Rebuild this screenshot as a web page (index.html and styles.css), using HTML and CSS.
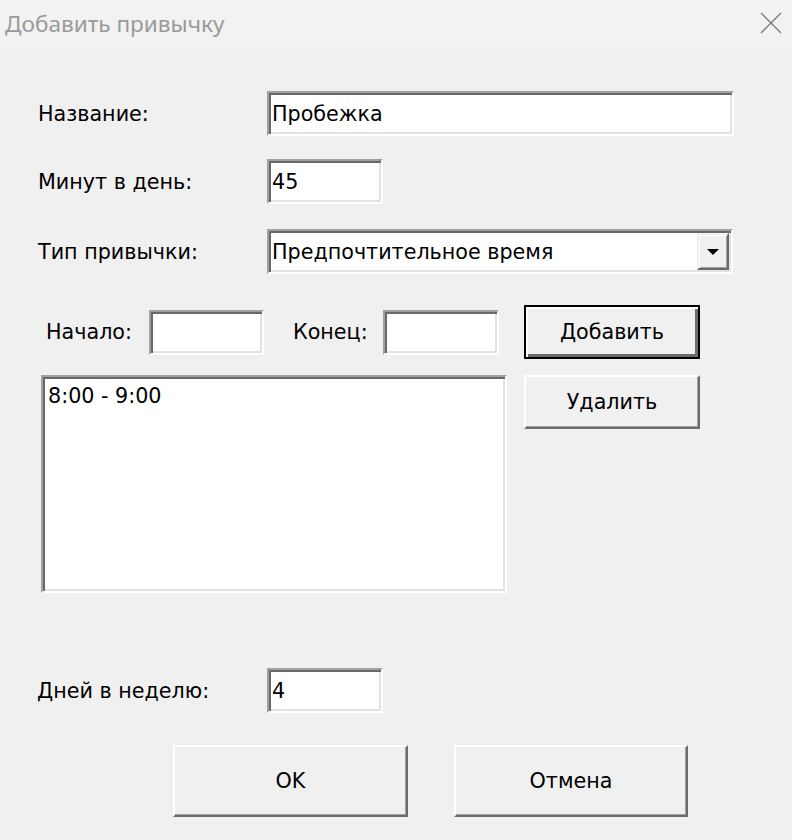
FILE: index.html
```html
<!DOCTYPE html>
<html lang="ru">
<head>
<meta charset="utf-8">
<title>Добавить привычку</title>
<link rel="stylesheet" href="styles.css">
</head>
<body>
<div class="dialog">
  <div class="titlebar">
    <span class="title">Добавить привычку</span>
    <svg class="close" width="22" height="22" viewBox="0 0 22 22"><path d="M1 1 L21 21 M21 1 L1 21" stroke="#7a7a7a" stroke-width="1.3" fill="none"/></svg>
  </div>
  <div class="content">
    <div class="row row-name">
      <span class="label">Название:</span>
      <div class="field field-wide">Пробежка</div>
    </div>
    <div class="row row-minutes">
      <span class="label">Минут в день:</span>
      <div class="field field-small">45</div>
    </div>
    <div class="row row-type">
      <span class="label">Тип привычки:</span>
      <div class="field combo">
        <span class="combo-text">Предпочтительное время</span>
        <span class="combo-btn"><span class="arrow"></span></span>
      </div>
    </div>
    <div class="time-row">
      <span class="label-start">Начало:</span>
      <div class="field field-time"></div>
      <span class="label-end">Конец:</span>
      <div class="field field-time2"></div>
      <div class="btn btn-default btn-side"><span class="btn-inner">Добавить</span></div>
    </div>
    <div class="list-row">
      <div class="field listbox"><div class="list-item">8:00 - 9:00</div></div>
      <div class="btn btn-side btn-remove"><span class="btn-inner">Удалить</span></div>
    </div>
    <div class="row row-days">
      <span class="label label-days">Дней в неделю:</span>
      <div class="field field-small">4</div>
    </div>
    <div class="actions">
      <div class="btn btn-ok"><span class="btn-inner">OK</span></div>
      <div class="btn btn-cancel"><span class="btn-inner">Отмена</span></div>
    </div>
  </div>
</div>
</body>
</html>
```
FILE: styles.css
```css
html, body {
  margin: 0;
  padding: 0;
}
body {
  width: 792px;
  height: 840px;
  background: #f0f0f0;
  font-family: "DejaVu Sans", "Liberation Sans", sans-serif;
  font-size: 20.7px;
  color: #000;
  overflow: hidden;
}
.dialog {
  width: 792px;
  height: 840px;
}
.titlebar {
  height: 50px;
  background: #f2f2f2;
  display: flex;
  align-items: center;
  justify-content: space-between;
  padding: 0 10px 4px 5px;
  box-sizing: border-box;
}
.title {
  font-family: "Noto Sans", "Open Sans", sans-serif;
  font-size: 22.6px;
  color: #9a9a9a;
}
.close {
  display: block;
}
.content {
  padding-top: 41px;
}
.row {
  display: flex;
  align-items: center;
  padding-left: 38px;
}
.label {
  width: 229px;
  flex: none;
}
.label-days {
  width: 230px;
}
.field {
  box-sizing: border-box;
  height: 45px;
  background: #fff;
  border: 2px solid;
  border-color: #a0a0a0 #ffffff #ffffff #a0a0a0;
  box-shadow: inset 2px 2px 0 #696969, inset -2px -2px 0 #e3e3e3;
  padding: 1px 3px 0 3px;
  display: flex;
  align-items: center;
  flex: none;
}
.field-wide {
  width: 467px;
}
.field-small {
  width: 116px;
}
.row-minutes {
  margin-top: 23px;
}
.row-type {
  margin-top: 25px;
}
.combo {
  width: 466px;
  padding: 2px 2px 2px 3px;
  align-items: stretch;
}
.combo-text {
  flex: 1;
  display: flex;
  align-items: center;
}
.combo-btn {
  width: 32px;
  box-sizing: border-box;
  background: #f0f0f0;
  border: 2px solid;
  border-color: #f0f0f0 #696969 #696969 #f0f0f0;
  box-shadow: inset 1px 1px 0 #ffffff, inset -1px -1px 0 #a0a0a0;
  display: flex;
  align-items: center;
  justify-content: center;
}
.arrow {
  width: 0;
  height: 0;
  border-left: 6px solid transparent;
  border-right: 6px solid transparent;
  border-top: 6px solid #000;
}
.time-row {
  display: flex;
  align-items: center;
  padding-left: 46px;
  margin-top: 31px;
}
.label-start {
  width: 103px;
  flex: none;
}
.field-time {
  width: 115px;
}
.label-end {
  width: 90px;
  margin-left: 29px;
  flex: none;
}
.field-time2 {
  width: 116px;
}
.btn {
  box-sizing: border-box;
  background: #f0f0f0;
  border: 2px solid;
  border-color: #ffffff #6b6b6b #6b6b6b #ffffff;
  box-shadow: inset -1px -1px 0 #a0a0a0;
  display: flex;
  align-items: center;
  justify-content: center;
  flex: none;
}
.btn-inner {
  display: block;
}
.btn-side {
  width: 176px;
  height: 54px;
  margin-left: 25px;
}
.btn-default {
  border: 2px solid #000;
  box-shadow: inset 2px 2px 0 #ffffff, inset -3px -3px 0 #6b6b6b;
}
.list-row {
  display: flex;
  align-items: flex-start;
  padding-left: 41px;
  margin-top: 16px;
}
.listbox {
  width: 466px;
  height: 218px;
  align-items: flex-start;
  padding: 6px 5px;
}
.list-item {
  line-height: 26px;
}
.btn-remove {
  margin-left: 17px;
}
.row-days {
  margin-top: 75px;
  padding-left: 37px;
}
.actions {
  display: flex;
  padding-left: 173px;
  margin-top: 32px;
  gap: 46px;
}
.btn-ok {
  width: 235px;
  height: 72px;
}
.btn-cancel {
  width: 234px;
  height: 72px;
}
```
